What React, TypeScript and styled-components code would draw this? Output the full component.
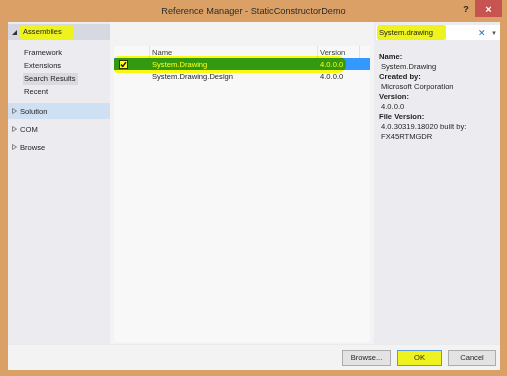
import React from 'react';
import styled, { createGlobalStyle } from 'styled-components';

const GlobalStyle = createGlobalStyle`
  html, body {
    margin: 0;
    padding: 0;
  }
  body {
    width: 507px;
    height: 376px;
    overflow: hidden;
    background: #dfe6ee;
    font-family: "Liberation Sans", Arial, sans-serif;
    color: #1e1e1e;
  }
`;

const Window = styled.div`
  width: 507px;
  height: 376px;
  box-sizing: border-box;
  background: #daa065;
  display: flex;
  flex-direction: column;
`;

const TitleBar = styled.div`
  height: 22px;
  flex: none;
  display: grid;
  grid-template-columns: 1fr auto 1fr;
  align-items: center;
`;

const Title = styled.div`
  grid-column: 2;
  font-size: 9.2px;
  color: #2b2b2b;
`;

const Controls = styled.div`
  grid-column: 3;
  justify-self: end;
  align-self: start;
  display: flex;
  align-items: flex-start;
  margin-right: 5px;
`;

const HelpButton = styled.div`
  width: 18px;
  height: 17px;
  display: flex;
  align-items: center;
  justify-content: center;
  font-size: 9px;
  font-weight: bold;
  color: #222;
`;

const CloseButton = styled.div`
  width: 27px;
  height: 17px;
  background: #c75450;
  color: #fff;
  display: flex;
  align-items: center;
  justify-content: center;
  font-size: 11px;
  font-weight: bold;
`;

const Body = styled.div`
  flex: 1;
  margin: 0 7px 6px 8px;
  background: #f3f3f3;
  display: flex;
  flex-direction: column;
  min-height: 0;
`;

const Panes = styled.div`
  flex: 1;
  display: flex;
  min-height: 0;
`;

const Nav = styled.div`
  width: 102px;
  flex: none;
  background: #ebebf0;
  padding-top: 2px;
  font-size: 7.6px;
`;

const GroupRow = styled.div<{ $bg?: string }>`
  height: 16px;
  display: flex;
  align-items: center;
  gap: 3px;
  padding-left: 4px;
  background: ${({ $bg }) => $bg || 'transparent'};
  margin-bottom: 2px;
`;

const SubList = styled.div`
  display: flex;
  flex-direction: column;
  padding: 4px 0 5px 15px;
`;

const SubItem = styled.div<{ $active?: boolean }>`
  height: 13px;
  display: flex;
  align-items: center;
  & > span {
    padding: 1px 2px 2px 1px;
    background: ${({ $active }) => ($active ? '#dadae1' : 'transparent')};
  }
`;

const Mark = styled.span<{ $pad?: string }>`
  background: #eef21e;
  padding: ${({ $pad }) => $pad || '2px 4px'};
  border-radius: 2px;
`;

const Main = styled.div`
  flex: 1;
  display: flex;
  flex-direction: column;
  padding: 24px 4px 2px 4px;
`;

const List = styled.div`
  flex: 1;
  position: relative;
  background: #f8f8f8;
  font-size: 7.6px;
`;

const Cols = styled.div`
  display: grid;
  grid-template-columns: 36px 168px 42px 1fr;
`;

const HeaderRow = styled(Cols)`
  height: 12px;
  color: #3a3a3a;
`;

const HeaderCell = styled.div`
  display: flex;
  align-items: center;
  padding-left: 2px;
  border-right: 1px solid #e2e2e2;
  &:last-child {
    border-right: none;
  }
`;

const Row = styled(Cols)<{ $selected?: boolean }>`
  height: 12px;
  background: ${({ $selected }) => ($selected ? '#3399ff' : 'transparent')};
  color: ${({ $selected }) => ($selected ? '#fff' : '#1e1e1e')};
`;

const Cell = styled.div`
  display: flex;
  align-items: center;
  padding-left: 2px;
`;

const CheckBox = styled.div`
  width: 7px;
  height: 7px;
  margin-left: 3px;
  background: #fff;
  border: 1px solid #333;
  display: flex;
  align-items: center;
  justify-content: center;
`;

const Highlighter = styled.div`
  position: absolute;
  left: 0;
  top: 10px;
  width: 232px;
  height: 17px;
  background: #ffff10;
  mix-blend-mode: multiply;
  border-radius: 5px 8px 8px 4px;
  pointer-events: none;
`;

const Details = styled.div`
  width: 124px;
  flex: none;
  background: #ececf0;
  display: flex;
  flex-direction: column;
  padding: 3px 0 0 2px;
  font-size: 7.6px;
`;

const SearchBox = styled.div`
  height: 15px;
  background: #fff;
  display: flex;
  align-items: center;
  padding-left: 1px;
`;

const SearchText = styled.div`
  flex: 1;
`;

const ClearIcon = styled.span`
  color: #1f6fc5;
  font-size: 9px;
  margin-right: 5px;
`;

const Caret = styled.span`
  color: #555;
  font-size: 6px;
  margin-right: 3px;
`;

const Info = styled.div`
  margin-top: 12px;
  padding-left: 3px;
  line-height: 10px;
`;

const Label = styled.div`
  font-weight: bold;
`;

const Value = styled.div`
  padding-left: 2px;
`;

const Footer = styled.div`
  height: 25px;
  flex: none;
  display: flex;
  justify-content: flex-end;
  align-items: center;
  gap: 6px;
  padding-right: 4px;
  background: #f3f3f3;
  border-top: 1px solid #ebebeb;
`;

const Button = styled.div<{ $w: number; $primary?: boolean }>`
  width: ${({ $w }) => $w}px;
  height: 16px;
  box-sizing: border-box;
  display: flex;
  align-items: center;
  justify-content: center;
  font-size: 7.6px;
  background: ${({ $primary }) => ($primary ? '#eef21e' : '#e3e3e3')};
  border: 1px solid ${({ $primary }) => ($primary ? '#5a9ad6' : '#acacac')};
`;

const Expanded = () => (
  <svg width="5" height="5" viewBox="0 0 5 5">
    <path d="M5 0 L5 5 L0 5 Z" fill="#333" />
  </svg>
);

const Collapsed = () => (
  <svg width="5" height="6" viewBox="0 0 5 6">
    <path d="M0.5 0.5 L4.5 3 L0.5 5.5 Z" fill="none" stroke="#777" strokeWidth="0.9" />
  </svg>
);

const Check = () => (
  <svg width="7" height="7" viewBox="0 0 7 7">
    <path d="M1 3.5 L2.8 5.5 L6 1.2" fill="none" stroke="#111" strokeWidth="1.4" />
  </svg>
);

const App = () => {
  return (
    <>
      <GlobalStyle />
      <Window>
        <TitleBar>
          <Title>Reference Manager - StaticConstructorDemo</Title>
          <Controls>
            <HelpButton>?</HelpButton>
            <CloseButton>×</CloseButton>
          </Controls>
        </TitleBar>
        <Body>
          <Panes>
            <Nav>
              <GroupRow $bg="#d6d9e2">
                <Expanded />
                <Mark $pad="2px 12px 3px 3px">Assemblies</Mark>
              </GroupRow>
              <SubList>
                <SubItem><span>Framework</span></SubItem>
                <SubItem><span>Extensions</span></SubItem>
                <SubItem $active><span>Search Results</span></SubItem>
                <SubItem><span>Recent</span></SubItem>
              </SubList>
              <GroupRow $bg="#cfe0f3">
                <Collapsed />
                <span>Solution</span>
              </GroupRow>
              <GroupRow>
                <Collapsed />
                <span>COM</span>
              </GroupRow>
              <GroupRow>
                <Collapsed />
                <span>Browse</span>
              </GroupRow>
            </Nav>
            <Main>
              <List>
                <HeaderRow>
                  <HeaderCell />
                  <HeaderCell>Name</HeaderCell>
                  <HeaderCell>Version</HeaderCell>
                  <HeaderCell />
                </HeaderRow>
                <Row $selected>
                  <Cell>
                    <CheckBox><Check /></CheckBox>
                  </Cell>
                  <Cell>System.Drawing</Cell>
                  <Cell>4.0.0.0</Cell>
                  <Cell />
                </Row>
                <Row>
                  <Cell />
                  <Cell>System.Drawing.Design</Cell>
                  <Cell>4.0.0.0</Cell>
                  <Cell />
                </Row>
                <Highlighter />
              </List>
            </Main>
            <Details>
              <SearchBox>
                <SearchText>
                  <Mark $pad="3px 13px 3px 2px">System.drawing</Mark>
                </SearchText>
                <ClearIcon>✕</ClearIcon>
                <Caret>▼</Caret>
              </SearchBox>
              <Info>
                <Label>Name:</Label>
                <Value>System.Drawing</Value>
                <Label>Created by:</Label>
                <Value>Microsoft Corporation</Value>
                <Label>Version:</Label>
                <Value>4.0.0.0</Value>
                <Label>File Version:</Label>
                <Value>4.0.30319.18020 built by:</Value>
                <Value>FX45RTMGDR</Value>
              </Info>
            </Details>
          </Panes>
          <Footer>
            <Button $w={49}>Browse...</Button>
            <Button $w={45} $primary>OK</Button>
            <Button $w={48}>Cancel</Button>
          </Footer>
        </Body>
      </Window>
    </>
  );
};

export default App;
